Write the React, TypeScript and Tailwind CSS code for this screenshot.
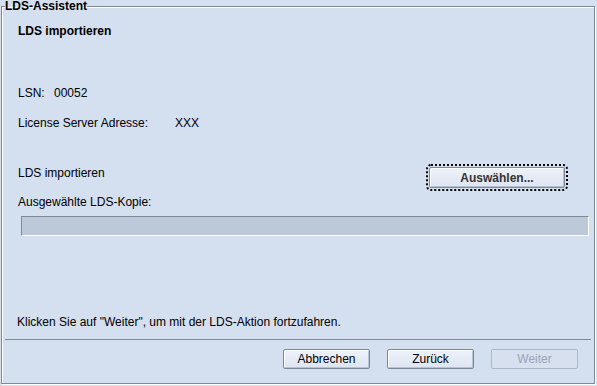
import React, { FC } from 'react';

const font = "font-['Liberation_Sans',Arial,sans-serif]";

type DialogButtonProps = {
  label: string;
  disabled?: boolean;
};

const DialogButton: FC<DialogButtonProps> = ({ label, disabled }) => (
  <button
    type="button"
    disabled={disabled}
    className={
      disabled
        ? 'w-[87px] h-[20px] rounded-[2px] border border-[#aeb7c6] bg-[#d6e0ef] text-[12px] leading-[14px] text-[#9aa4b6]'
        : 'w-[87px] h-[20px] rounded-[2px] border border-[#7d8798] bg-gradient-to-b from-[#eef2f9] to-[#dde5f2] text-[12px] leading-[14px] text-black shadow-[inset_1px_1px_0_#fff,inset_-1px_-1px_0_#b8c2d2]'
    }
  >
    {label}
  </button>
);

export default function App() {
  return (
    <div className={`w-[597px] h-[386px] bg-[#d4dfef] overflow-hidden ${font}`}>
      <fieldset className="ml-[1px] min-w-0 w-[594px] h-[384px] border border-[#7f8898] shadow-[inset_1px_1px_0_#fff,1px_1px_0_#fff]">
        <legend className="ml-[3px] text-[12px] leading-[13px] font-bold text-black">
          LDS-Assistent
        </legend>

        <div className="flex flex-col px-[16px] text-[12px] leading-[14px] text-black">
          <div className="mt-[11px] font-bold">LDS importieren</div>

          <div className="mt-[48px] flex">
            <span className="w-[36px]">LSN:</span>
            <span>00052</span>
          </div>

          <div className="mt-[16px] flex">
            <span className="w-[157px]">License Server Adresse:</span>
            <span>XXX</span>
          </div>

          <div className="mt-[36px] flex justify-between">
            <span>LDS importieren</span>
            <button
              type="button"
              className="mt-[1px] mr-[13px] w-[136px] h-[21px] rounded-[2px] border border-[#7d8798] bg-gradient-to-b from-[#eef2f9] to-[#dde5f2] text-[12px] font-bold text-[#333] shadow-[inset_1px_1px_0_#fff,inset_-1px_-1px_0_#b8c2d2] outline-2 outline-dotted outline-black outline-offset-[1px]"
            >
              Auswählen...
            </button>
          </div>

          <div className="mt-[7px]">Ausgewählte LDS-Kopie:</div>

          <div className="mt-[7px] ml-[3px] -mr-[11px] h-[20px] bg-[#bdc8d8] border-t border-l border-t-[#7f8898] border-l-[#7f8898] border-b border-r border-b-white border-r-white" />

          <div className="mt-[79px] -ml-[1px]">
            Klicken Sie auf "Weiter", um mit der LDS-Aktion fortzufahren.
          </div>
        </div>

        <div className="mt-[10px] mx-[3px] h-[1px] bg-[#7f8898]" />

        <div className="mt-[9px] pr-[16px] flex justify-end gap-[17px]">
          <DialogButton label="Abbrechen" />
          <DialogButton label="Zurück" />
          <DialogButton label="Weiter" disabled />
        </div>
      </fieldset>
    </div>
  );
}
